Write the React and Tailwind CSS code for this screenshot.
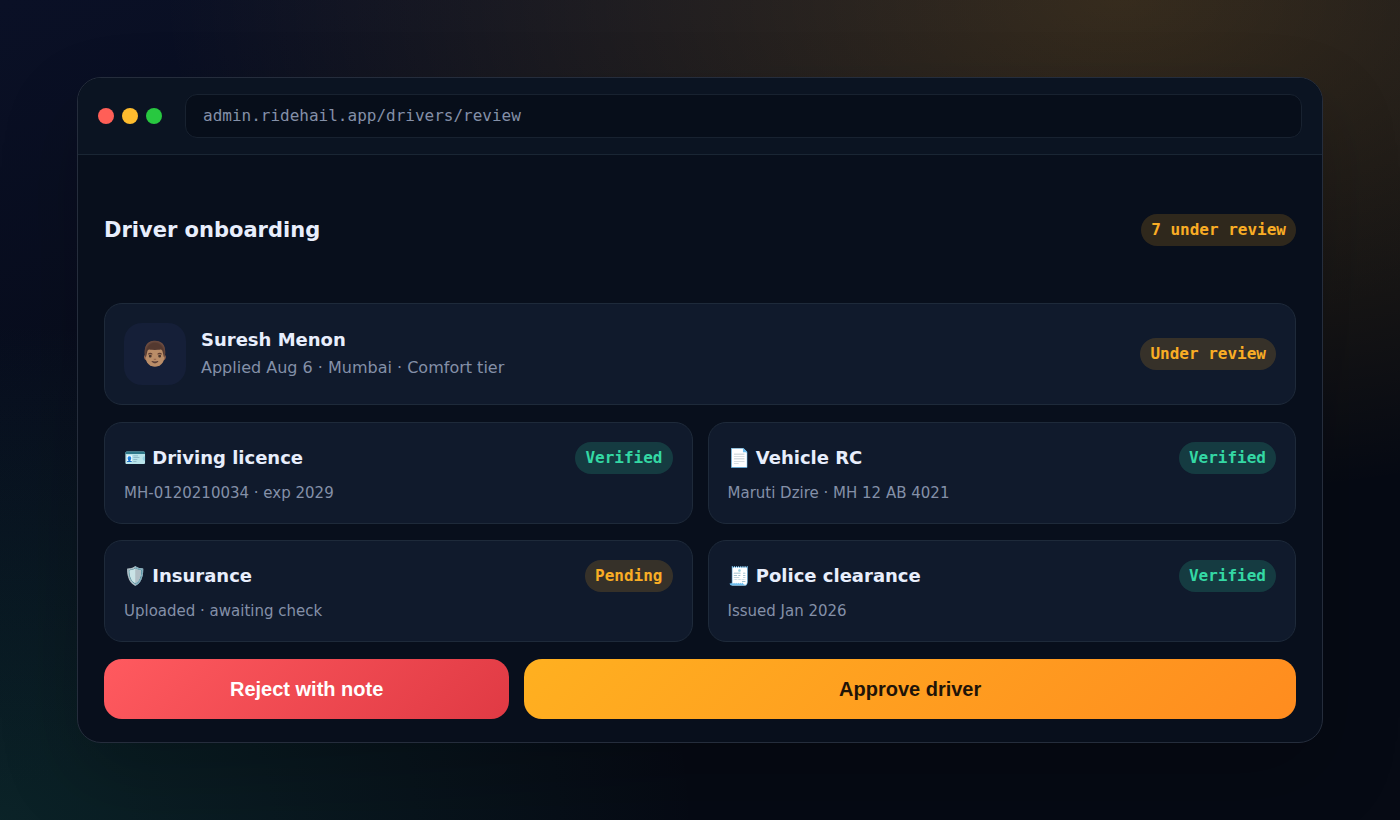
import React from 'react';

const pillTones = {
  amber: 'bg-[#ffb020]/16 text-[#f9ad25]',
  green: 'bg-[#2dd4a0]/18 text-[#34d8a4]',
};

const documents = [
  { icon: '🪪', title: 'Driving licence', detail: 'MH-0120210034 · exp 2029', status: 'Verified', tone: 'green' },
  { icon: '📄', title: 'Vehicle RC', detail: 'Maruti Dzire · MH 12 AB 4021', status: 'Verified', tone: 'green' },
  { icon: '🛡️', title: 'Insurance', detail: 'Uploaded · awaiting check', status: 'Pending', tone: 'amber' },
  { icon: '🧾', title: 'Police clearance', detail: 'Issued Jan 2026', status: 'Verified', tone: 'green' },
];

const Pill = ({ tone, children }) => (
  <span
    className={`shrink-0 rounded-full px-2.5 font-['DejaVu_Sans_Mono',monospace] text-base leading-8 font-bold ${pillTones[tone]}`}
  >
    {children}
  </span>
);

const Card = ({ className = '', children }) => (
  <div className={`rounded-[18px] border border-[#1e2a3a] bg-[#101a2c] p-[19px] ${className}`}>
    {children}
  </div>
);

const AddressBar = () => (
  <div className="flex items-center gap-[23px] border-b border-[#1a2634] bg-[#0b1422] px-5 py-4">
    <div className="flex gap-2">
      <span className="size-4 rounded-full bg-[#ff5f57]" />
      <span className="size-4 rounded-full bg-[#febc2e]" />
      <span className="size-4 rounded-full bg-[#28c840]" />
    </div>
    <input
      type="text"
      aria-label="Address"
      defaultValue="admin.ridehail.app/drivers/review"
      className="h-11 min-w-0 flex-1 rounded-xl border border-[#182230] bg-[#070e1a] px-[17px] pb-0.5 font-['DejaVu_Sans_Mono',monospace] text-base text-[#8490a8] outline-none"
    />
  </div>
);

const DocumentCard = ({ doc }) => (
  <Card>
    <div className="flex items-center justify-between gap-4">
      <h3 className="text-lg leading-8 font-bold text-[#e8eefc]">
        {doc.icon} {doc.title}
      </h3>
      <Pill tone={doc.tone}>{doc.status}</Pill>
    </div>
    <p className="mt-2 text-[15px] leading-[22px] text-[#8490a8]">{doc.detail}</p>
  </Card>
);

export default function App() {
  return (
    <div className="bg-[radial-gradient(960px_500px_at_80%_0%,rgba(255,176,32,0.19),transparent),radial-gradient(700px_500px_at_0%_100%,rgba(45,212,180,0.12),transparent),linear-gradient(160deg,#0a1026,#060a14_60%)] p-[77px] font-['DejaVu_Sans',sans-serif]">
      <div className="overflow-hidden rounded-3xl border border-[#252d3c] bg-[#080f1c] shadow-[0_32px_80px_rgba(0,0,0,0.2)]">
        <AddressBar />

        <main className="px-[26px] pb-[23px]">
          <header className="flex items-center justify-between pt-[59px] pb-[57px]">
            <h1 className="text-[21px] leading-8 font-bold text-[#e8eefc]">Driver onboarding</h1>
            <Pill tone="amber">7 under review</Pill>
          </header>

          <div className="flex flex-col gap-[17px]">
            {/* Applicant */}
            <Card className="flex items-center gap-[15px]">
              <div className="flex size-[62px] items-center justify-center rounded-[18px] bg-[#151f38] text-2xl">
                👨🏽
              </div>
              <div className="min-w-0 flex-1">
                <h2 className="text-lg leading-7 font-bold text-[#e8eefc]">Suresh Menon</h2>
                <p className="text-base leading-7 text-[#8490a8]">Applied Aug 6 · Mumbai · Comfort tier</p>
              </div>
              <Pill tone="amber">Under review</Pill>
            </Card>

            {/* Documents */}
            <div className="grid grid-cols-2 gap-x-[15px] gap-y-4">
              {documents.map((doc) => (
                <DocumentCard key={doc.title} doc={doc} />
              ))}
            </div>

            <div className="flex gap-[15px] font-['Liberation_Sans',sans-serif] text-xl font-bold">
              <button
                type="button"
                className="h-[60px] w-[34%] rounded-[18px] bg-[linear-gradient(135deg,#ff5a5f,#e03a44)] text-white"
              >
                Reject with note
              </button>
              <button
                type="button"
                className="h-[60px] flex-1 rounded-[18px] bg-[linear-gradient(135deg,#ffb020,#ff8c1f)] text-[#1f1408]"
              >
                Approve driver
              </button>
            </div>
          </div>
        </main>
      </div>
    </div>
  );
}
